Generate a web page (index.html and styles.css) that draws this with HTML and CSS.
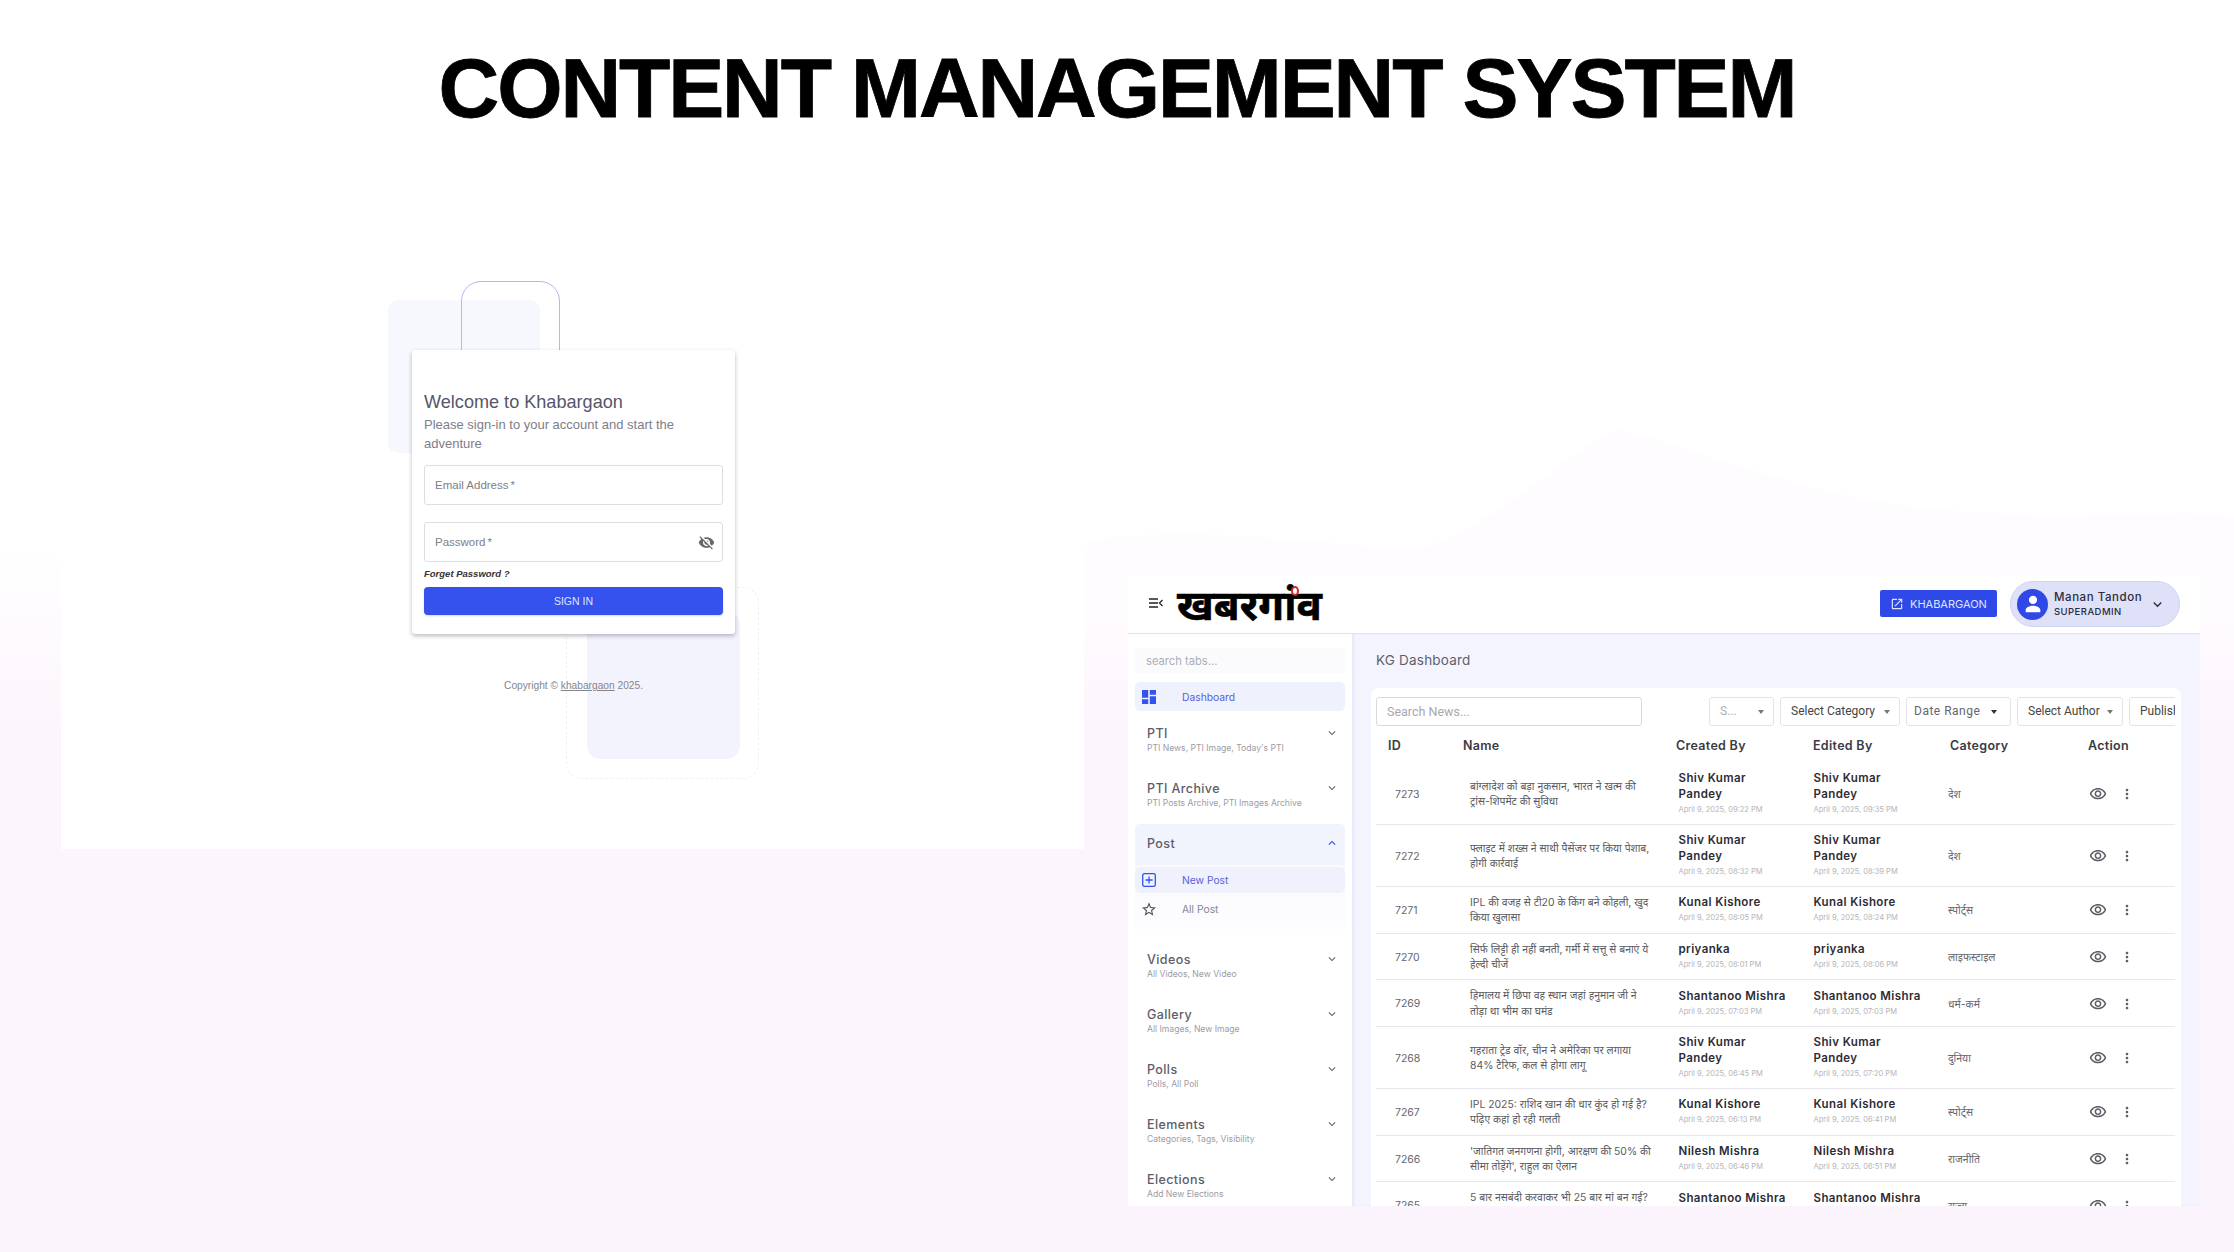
FILE: index.html
```html
<!DOCTYPE html>
<html>
<head>
	<title>Content Management System</title>
	<link rel="stylesheet" href="styles.css">
</head>
<body>
<svg class="defs" width="0" height="0">
	<symbol id="i-eye" viewBox="0 0 24 24"><path d="M12 6c3.79 0 7.17 2.13 8.82 5.5C19.17 14.87 15.79 17 12 17s-7.17-2.13-8.82-5.5C4.83 8.13 8.21 6 12 6m0-2C7 4 2.73 7.11 1 11.5 2.73 15.89 7 19 12 19s9.27-3.11 11-7.5C21.27 7.11 17 4 12 4zm0 5c1.38 0 2.5 1.12 2.5 2.5S13.38 14 12 14s-2.5-1.12-2.5-2.5S10.62 9 12 9m0-2c-2.48 0-4.5 2.02-4.5 4.5S9.52 16 12 16s4.5-2.02 4.5-4.5S14.48 7 12 7z"/></symbol>
	<symbol id="i-dots" viewBox="0 0 24 24"><path d="M12 8c1.1 0 2-.9 2-2s-.9-2-2-2-2 .9-2 2 .9 2 2 2zm0 2c-1.1 0-2 .9-2 2s.9 2 2 2 2-.9 2-2-.9-2-2-2zm0 6c-1.1 0-2 .9-2 2s.9 2 2 2 2-.9 2-2-.9-2-2-2z"/></symbol>
	<symbol id="i-down" viewBox="0 0 24 24"><path d="M16.59 8.59 12 13.17 7.41 8.59 6 10l6 6 6-6z"/></symbol>
	<symbol id="i-up" viewBox="0 0 24 24"><path d="M12 8l-6 6 1.41 1.41L12 10.83l4.59 4.58L18 14z"/></symbol>
</svg>

<div class="slide">
	<h1 class="slide-title">CONTENT MANAGEMENT SYSTEM</h1>

	<svg class="hill" viewBox="0 0 1147 190" preserveAspectRatio="none"><path d="M0 110C120 95 240 115 330 120 420 90 480 20 530 0 640 25 720 70 860 80 960 90 1060 80 1147 85V190H0z"/></svg>

	<!-- login shot -->
	<div class="login-shot">
		<span class="deco deco-fill-a"></span>
		<span class="deco deco-line"></span>
		<span class="deco deco-fill-b"></span>
		<span class="deco deco-dash"></span>
		<div class="login-card">
			<h2>Welcome to Khabargaon</h2>
			<p class="login-sub">Please sign-in to your account and start the adventure</p>
			<div class="login-input">Email Address<i>*</i></div>
			<div class="login-input login-pass">Password<i>*</i>
				<svg viewBox="0 0 24 24"><path d="M12 7c2.76 0 5 2.24 5 5 0 .65-.13 1.26-.36 1.83l2.92 2.92c1.51-1.26 2.7-2.89 3.43-4.75-1.73-4.39-6-7.5-11-7.5-1.4 0-2.74.25-3.98.7l2.16 2.16C10.74 7.13 11.35 7 12 7zM2 4.27l2.28 2.28.46.46C3.08 8.3 1.78 10.02 1 12c1.73 4.39 6 7.5 11 7.5 1.55 0 3.03-.3 4.38-.84l.42.42L19.73 22 21 20.73 3.27 3 2 4.27zM7.53 9.8l1.55 1.55c-.05.21-.08.43-.08.65 0 1.66 1.34 3 3 3 .22 0 .44-.03.65-.08l1.55 1.55c-.67.33-1.41.53-2.2.53-2.76 0-5-2.24-5-5 0-.79.2-1.53.53-2.2zm4.31-.78l3.15 3.15.02-.16c0-1.66-1.34-3-3-3l-.17.01z"/></svg>
			</div>
			<div class="login-forget">Forget Password ?</div>
			<div class="login-btn">SIGN IN</div>
		</div>
		<p class="login-copy">Copyright © <u>khabargaon</u> 2025.</p>
	</div>

	<!-- dashboard shot -->
	<div class="dash-shot">
		<header class="dash-head">
			<svg class="menu-icon" viewBox="0 0 14 10"><path d="M0 1h9M0 5h9M0 9h9M13.5 2 10.5 5l3 3" fill="none" stroke="#222" stroke-width="1.3"/></svg>
			<div class="logo">खबरगांव<span class="logo-ring"></span></div>
			<div class="site-btn">
				<svg viewBox="0 0 24 24"><path d="M19 19H5V5h7V3H5a2 2 0 0 0-2 2v14a2 2 0 0 0 2 2h14a2 2 0 0 0 2-2v-7h-2v7zM14 3v2h3.59l-9.83 9.83 1.41 1.41L19 6.41V10h2V3h-7z"/></svg>
				KHABARGAON
			</div>
			<div class="user-pill">
				<span class="avatar"><svg viewBox="0 0 24 24"><path d="M12 12a4.5 4.5 0 1 0 0-9 4.5 4.5 0 0 0 0 9zm0 2c-3.3 0-8 1.7-8 4.6V21h16v-2.4c0-2.9-4.7-4.6-8-4.6z"/></svg></span>
				<span class="user-text"><b>Manan Tandon</b><small>SUPERADMIN</small></span>
				<svg class="user-caret" viewBox="0 0 24 24"><use href="#i-down"/></svg>
			</div>
		</header>

		<aside class="side">
			<div class="side-search">search tabs...</div>
			<div class="side-item active">
				<svg class="blue" viewBox="3 3 18 18"><path d="M3 13h8V3H3v10zm0 8h8v-6H3v6zm10 0h8V11h-8v10zm0-18v6h8V3h-8z"/></svg>
				Dashboard
			</div>
			<div class="side-group"><div class="group-title">PTI<svg viewBox="0 0 24 24"><use href="#i-down"/></svg></div><small>PTI News, PTI Image, Today's PTI</small></div>
			<div class="side-group"><div class="group-title">PTI Archive<svg viewBox="0 0 24 24"><use href="#i-down"/></svg></div><small>PTI Posts Archive, PTI Images Archive</small></div>
			<div class="side-open">
				<div class="group-title open">Post<svg viewBox="0 0 24 24"><use href="#i-up"/></svg></div>
				<div class="side-item active">
					<svg class="blue" viewBox="0 0 14 14"><rect x=".7" y=".7" width="12.6" height="12.6" rx="1.6" fill="none" stroke="#3552ee" stroke-width="1.3"/><path d="M7 3.4v7.2M3.4 7h7.2" stroke="#3552ee" stroke-width="1.3"/></svg>
					New Post
				</div>
				<div class="side-item">
					<svg viewBox="2 2 20 19"><path d="M22 9.24l-7.19-.62L12 2 9.19 8.63 2 9.24l5.46 4.73L5.82 21 12 17.27 18.18 21l-1.63-7.03L22 9.24zM12 15.4l-3.76 2.27 1-4.28-3.32-2.88 4.38-.38L12 6.1l1.71 4.04 4.38.38-3.32 2.88 1 4.28L12 15.4z"/></svg>
					All Post
				</div>
			</div>
			<div class="side-group"><div class="group-title">Videos<svg viewBox="0 0 24 24"><use href="#i-down"/></svg></div><small>All Videos, New Video</small></div>
			<div class="side-group"><div class="group-title">Gallery<svg viewBox="0 0 24 24"><use href="#i-down"/></svg></div><small>All Images, New Image</small></div>
			<div class="side-group"><div class="group-title">Polls<svg viewBox="0 0 24 24"><use href="#i-down"/></svg></div><small>Polls, All Poll</small></div>
			<div class="side-group"><div class="group-title">Elements<svg viewBox="0 0 24 24"><use href="#i-down"/></svg></div><small>Categories, Tags, Visibility</small></div>
			<div class="side-group"><div class="group-title">Elections<svg viewBox="0 0 24 24"><use href="#i-down"/></svg></div><small>Add New Elections</small></div>
		</aside>

		<main class="main">
			<div class="crumb">KG Dashboard</div>
			<div class="panel">
				<div class="filters">
					<div class="news-search">Search News...</div>
					<div class="select sel-s">S...</div>
					<div class="select sel-cat">Select Category</div>
					<div class="select sel-date">Date Range</div>
					<div class="select sel-author">Select Author</div>
					<div class="select sel-pub">Publish Status</div>
				</div>
				<div class="thead"><span>ID</span><span>Name</span><span>Created By</span><span>Edited By</span><span>Category</span><span>Action</span></div>

				<div class="row tall">
					<span class="id">7273</span>
					<span class="name">बांग्लादेश को बड़ा नुकसान, भारत ने खत्म की<br>ट्रांस-शिपमेंट की सुविधा</span>
					<span class="who"><b>Shiv Kumar Pandey</b><small>April 9, 2025, 09:22 PM</small></span>
					<span class="who"><b>Shiv Kumar Pandey</b><small>April 9, 2025, 09:35 PM</small></span>
					<span class="cat">देश</span>
					<span class="acts"><svg class="eye"><use href="#i-eye"/></svg><svg class="dots"><use href="#i-dots"/></svg></span>
				</div>
				<div class="row tall">
					<span class="id">7272</span>
					<span class="name">फ्लाइट में शख्स ने साथी पैसेंजर पर किया पेशाब,<br>होगी कार्रवाई</span>
					<span class="who"><b>Shiv Kumar Pandey</b><small>April 9, 2025, 08:32 PM</small></span>
					<span class="who"><b>Shiv Kumar Pandey</b><small>April 9, 2025, 08:39 PM</small></span>
					<span class="cat">देश</span>
					<span class="acts"><svg class="eye"><use href="#i-eye"/></svg><svg class="dots"><use href="#i-dots"/></svg></span>
				</div>
				<div class="row">
					<span class="id">7271</span>
					<span class="name">IPL की वजह से टी20 के किंग बने कोहली, खुद<br>किया खुलासा</span>
					<span class="who"><b>Kunal Kishore</b><small>April 9, 2025, 08:05 PM</small></span>
					<span class="who"><b>Kunal Kishore</b><small>April 9, 2025, 08:24 PM</small></span>
					<span class="cat">स्पोर्ट्स</span>
					<span class="acts"><svg class="eye"><use href="#i-eye"/></svg><svg class="dots"><use href="#i-dots"/></svg></span>
				</div>
				<div class="row">
					<span class="id">7270</span>
					<span class="name">सिर्फ लिट्टी ही नहीं बनती, गर्मी में सत्तू से बनाएं ये<br>हेल्दी चीजें</span>
					<span class="who"><b>priyanka</b><small>April 9, 2025, 08:01 PM</small></span>
					<span class="who"><b>priyanka</b><small>April 9, 2025, 08:06 PM</small></span>
					<span class="cat">लाइफस्टाइल</span>
					<span class="acts"><svg class="eye"><use href="#i-eye"/></svg><svg class="dots"><use href="#i-dots"/></svg></span>
				</div>
				<div class="row">
					<span class="id">7269</span>
					<span class="name">हिमालय में छिपा वह स्थान जहां हनुमान जी ने<br>तोड़ा था भीम का घमंड</span>
					<span class="who"><b>Shantanoo Mishra</b><small>April 9, 2025, 07:03 PM</small></span>
					<span class="who"><b>Shantanoo Mishra</b><small>April 9, 2025, 07:03 PM</small></span>
					<span class="cat">धर्म-कर्म</span>
					<span class="acts"><svg class="eye"><use href="#i-eye"/></svg><svg class="dots"><use href="#i-dots"/></svg></span>
				</div>
				<div class="row tall">
					<span class="id">7268</span>
					<span class="name">गहराता ट्रेड वॉर, चीन ने अमेरिका पर लगाया<br>84% टैरिफ, कल से होगा लागू</span>
					<span class="who"><b>Shiv Kumar Pandey</b><small>April 9, 2025, 06:45 PM</small></span>
					<span class="who"><b>Shiv Kumar Pandey</b><small>April 9, 2025, 07:20 PM</small></span>
					<span class="cat">दुनिया</span>
					<span class="acts"><svg class="eye"><use href="#i-eye"/></svg><svg class="dots"><use href="#i-dots"/></svg></span>
				</div>
				<div class="row">
					<span class="id">7267</span>
					<span class="name">IPL 2025: राशिद खान की धार कुंद हो गई है?<br>पढ़िए कहां हो रही गलती</span>
					<span class="who"><b>Kunal Kishore</b><small>April 9, 2025, 06:13 PM</small></span>
					<span class="who"><b>Kunal Kishore</b><small>April 9, 2025, 06:41 PM</small></span>
					<span class="cat">स्पोर्ट्स</span>
					<span class="acts"><svg class="eye"><use href="#i-eye"/></svg><svg class="dots"><use href="#i-dots"/></svg></span>
				</div>
				<div class="row">
					<span class="id">7266</span>
					<span class="name">'जातिगत जनगणना होगी, आरक्षण की 50% की<br>सीमा तोड़ेंगे', राहुल का ऐलान</span>
					<span class="who"><b>Nilesh Mishra</b><small>April 9, 2025, 06:46 PM</small></span>
					<span class="who"><b>Nilesh Mishra</b><small>April 9, 2025, 06:51 PM</small></span>
					<span class="cat">राजनीति</span>
					<span class="acts"><svg class="eye"><use href="#i-eye"/></svg><svg class="dots"><use href="#i-dots"/></svg></span>
				</div>
				<div class="row">
					<span class="id">7265</span>
					<span class="name">5 बार नसबंदी करवाकर भी 25 बार मां बन गई?<br>जानिए पूरा मामला</span>
					<span class="who"><b>Shantanoo Mishra</b><small>April 9, 2025, 06:20 PM</small></span>
					<span class="who"><b>Shantanoo Mishra</b><small>April 9, 2025, 06:20 PM</small></span>
					<span class="cat">राज्य</span>
					<span class="acts"><svg class="eye"><use href="#i-eye"/></svg><svg class="dots"><use href="#i-dots"/></svg></span>
				</div>
			</div>
		</main>
	</div>
</div>
</body>
</html>
```
FILE: styles.css
```css
*{
	padding: 0;
	margin: 0;
	box-sizing: border-box;
}
body{
	width: 2234px;
	height: 1252px;
	overflow: hidden;
	background: #fff;
	font-family: "Inter", "Noto Sans", sans-serif;
}
.defs{
	position: absolute;
}
.slide{
	position: relative;
	width: 2234px;
	height: 1252px;
	background: linear-gradient(180deg, #fff 0, #fff 44%, #fdf5fd 58%, #fcf4fd 100%);
}
.slide-title{
	padding-top: 39px;
	text-align: center;
	font: 700 84px/98px "Liberation Sans", Arial, sans-serif;
	letter-spacing: -2.1px;
	-webkit-text-stroke: .8px #000;
	color: #000;
}
.hill{
	position: absolute;
	left: 1087px;
	top: 430px;
	width: 1147px;
	height: 190px;
	fill: #fefcfe;
}

/* login */
.login-shot{
	position: absolute;
	left: 61px;
	top: 255px;
	width: 1023px;
	height: 594px;
	padding: 95px 0 0 2px;
	background: #fff;
	display: flex;
	flex-direction: column;
	align-items: center;
	font-family: "Liberation Sans", Arial, sans-serif;
}
.deco{
	position: absolute;
	display: block;
}
.deco-fill-a{
	left: 327px;
	top: 45px;
	width: 152px;
	height: 153px;
	background: #f7f7fe;
	border-radius: 10px;
}
.deco-line{
	left: 400px;
	top: 26px;
	width: 99px;
	height: 100px;
	border: 1.5px solid #b9b5ee;
	border-radius: 20px;
}
.deco-fill-b{
	left: 526px;
	top: 356px;
	width: 153px;
	height: 148px;
	background: #f3f3fd;
	border-radius: 14px;
}
.deco-dash{
	left: 505px;
	top: 332px;
	width: 193px;
	height: 192px;
	border: 1.5px dashed #f0f0f5;
	border-radius: 16px;
}
.login-card{
	position: relative;
	width: 323px;
	height: 284px;
	padding: 40px 12px 0;
	background: #fff;
	border-radius: 3px;
	box-shadow: 0 2px 4px rgba(60,60,80,.35);
}
.login-card h2{
	font-size: 18.1px;
	line-height: 24px;
	font-weight: 400;
	color: #56566a;
}
.login-sub{
	margin-top: 1px;
	font-size: 13px;
	line-height: 19px;
	color: #7d7d88;
}
.login-input{
	display: flex;
	align-items: center;
	height: 40px;
	margin-top: 12px;
	padding-left: 10px;
	border: 1px solid #dedee2;
	border-radius: 3px;
	font-size: 11.5px;
	color: #808088;
}
.login-input i{
	font-style: normal;
	margin-left: 2px;
}
.login-pass{
	margin-top: 17px;
}
.login-pass svg{
	width: 17px;
	height: 17px;
	margin-left: auto;
	margin-right: 7px;
	fill: #66666e;
}
.login-forget{
	margin-top: 6px;
	font-size: 9.5px;
	line-height: 12px;
	font-weight: 700;
	font-style: italic;
	color: #333;
}
.login-btn{
	margin-top: 7px;
	height: 28px;
	line-height: 28px;
	text-align: center;
	background: #3552ee;
	border-radius: 4px;
	font-size: 10.5px;
	color: #dfe4ff;
	box-shadow: 0 1px 2px rgba(60,60,80,.2);
}
.login-copy{
	position: relative;
	margin-top: 45px;
	font-size: 10.2px;
	line-height: 14px;
	color: #85858c;
}

/* dashboard */
.dash-shot{
	position: absolute;
	left: 1128px;
	top: 575px;
	width: 1072px;
	height: 631px;
	overflow: hidden;
	display: grid;
	grid-template-columns: 224px 1fr;
	grid-template-rows: 59px 1fr;
	background: #fff;
}
.dash-head{
	grid-column: 1 / 3;
	display: flex;
	align-items: center;
	padding: 0 20px 0 21px;
	background: #fff;
	border-bottom: 1px solid #e4e4e8;
}
.menu-icon{
	width: 14px;
	height: 10px;
	margin-top: -3px;
}
.logo{
	position: relative;
	margin-left: 14px;
	font: 700 42px/50px "Noto Sans", "Liberation Serif", serif;
	color: #000;
	-webkit-text-stroke: .6px #000;
}
.logo-ring{
	position: absolute;
	left: 114px;
	top: 7px;
	width: 8px;
	height: 10px;
	background: #fff;
	border: 2px solid #d8262c;
	border-radius: 50%;
}
.site-btn{
	display: flex;
	align-items: center;
	gap: 6px;
	margin-left: auto;
	width: 117px;
	height: 27px;
	padding-left: 10px;
	background: #2f48e8;
	border-radius: 2px;
	color: #dfe4ff;
	font-size: 11px;
	margin-top: -1px;
}
.site-btn svg{
	width: 14px;
	height: 14px;
	fill: #dfe4ff;
}
.user-pill{
	display: flex;
	align-items: center;
	width: 170px;
	height: 46px;
	margin-left: 13px;
	padding-left: 6px;
	background: #dfe1f8;
	border: 1px solid #d0d3f3;
	border-radius: 23px;
}
.avatar{
	display: flex;
	align-items: center;
	justify-content: center;
	width: 31px;
	height: 31px;
	background: #2f48e8;
	border-radius: 50%;
}
.avatar svg{
	width: 22px;
	height: 22px;
	fill: #fff;
}
.user-text{
	display: flex;
	flex-direction: column;
	margin-left: 6px;
	color: #2c2c3a;
}
.user-text b{
	font-size: 11.5px;
	line-height: 15px;
	font-weight: 500;
	letter-spacing: .55px;
}
.user-text small{
	font-size: 9.5px;
	line-height: 14px;
	font-weight: 500;
	letter-spacing: .45px;
}
.user-caret{
	width: 17px;
	height: 17px;
	margin-left: 7px;
	fill: #2c2c3a;
}

/* sidebar */
.side{
	overflow: hidden;
	padding: 14px 7px 0;
	background: #fff;
}
.side-search{
	height: 25px;
	padding-left: 11px;
	line-height: 27px;
	background: #fbfbfe;
	font-size: 11.2px;
	color: #aeaeb6;
}
.side-item{
	display: flex;
	align-items: center;
	height: 26px;
	padding-left: 7px;
	border-radius: 5px;
	font-size: 10.3px;
	color: #85858e;
}
.side-item svg{
	width: 14px;
	height: 14px;
	margin-right: 26px;
	fill: #555;
}
.side-item.active{
	background: #eff1fc;
	color: #5a5fe0;
}
.side-item.active svg{
	fill: #3552ee;
}
.side-search + .side-item{
	height: 29px;
	margin-top: 9px;
	margin-bottom: 3px;
}
.side-group{
	height: 55px;
	padding: 10px 6px 0 12px;
}
.group-title{
	display: flex;
	align-items: center;
	justify-content: space-between;
	height: 18px;
	font-size: 12.5px;
	font-weight: 500;
	letter-spacing: .4px;
	color: #5d5d69;
}
.group-title svg{
	width: 14px;
	height: 14px;
	fill: #66666e;
}
.side-group small{
	display: block;
	margin-top: 1px;
	font-size: 8.6px;
	line-height: 11px;
	color: #9c9ca6;
}
.side-open{
	height: 116px;
	background: linear-gradient(180deg, #f9f9fe 0, #fcfcff 85%, #fff 100%);
	border-radius: 5px;
}
.group-title.open{
	height: 41px;
	padding: 0 6px 3px 12px;
	margin-bottom: 2px;
	background: #f1f3fd;
	border-radius: 5px 5px 0 0;
}
.group-title.open svg{
	fill: #3552ee;
}
.side-open .side-item + .side-item{
	margin-top: 3px;
}

/* content */
.main{
	overflow: hidden;
	padding: 0 19px;
	background: #f3f4fe;
	box-shadow: inset 2px 0 2px rgba(120,120,180,.08);
}
.crumb{
	padding: 18px 0 0 5px;
	height: 54px;
	font-size: 13.5px;
	line-height: 16px;
	letter-spacing: .2px;
	color: #5f5f68;
}
.panel{
	padding: 9px 6px 0 5px;
	background: #fff;
	border-radius: 8px 8px 0 0;
}
.filters{
	display: flex;
	height: 29px;
	overflow: hidden;
	font-family: "Roboto", sans-serif;
	font-size: 12px;
	color: #444;
}
.news-search{
	flex: none;
	width: 266px;
	margin-right: 67px;
	padding-left: 10px;
	line-height: 27px;
	border: 1px solid #d9d9dd;
	border-radius: 3px;
	color: #a8a8ae;
	font-size: 12.5px;
}
.select{
	position: relative;
	flex: none;
	margin-right: 6px;
	padding-left: 10px;
	line-height: 27px;
	border: 1px solid #e4e4e8;
	border-radius: 3px;
}
.select::after{
	content: "";
	position: absolute;
	top: 12px;
	right: 9px;
	border: 3.5px solid transparent;
	border-top: 4px solid #777;
	border-bottom: 0;
}
.sel-s{
	width: 65px;
	color: #b0b0b6;
}
.sel-cat{
	width: 120px;
}
.sel-date{
	width: 105px;
	padding-left: 7px;
	letter-spacing: .5px;
	color: #66666e;
}
.sel-date::after{
	right: 13px;
	border-top-color: #333;
}
.sel-author{
	width: 106px;
}
.sel-pub{
	width: 100px;
}
.thead{
	display: grid;
	grid-template-columns: 75px 213px 137px 137px 138px 1fr;
	height: 37px;
	padding: 2px 0 0 12px;
	align-items: center;
	font-size: 12.5px;
	font-weight: 600;
	letter-spacing: .3px;
	color: #3a3a44;
}
.row{
	display: grid;
	grid-template-columns: 75px 208.5px 135px 134.5px 142px 85px;
	align-items: center;
	height: 46.7px;
	padding: 1px 0 0 19px;
	border-bottom: 1px solid #e8e8ec;
}
.row.tall{
	height: 62px;
}
.id{
	font-size: 10.5px;
	color: #66666e;
}
.name{
	font-size: 10.4px;
	line-height: 15.5px;
	color: #5a5a60;
}
.who b{
	display: block;
	max-width: 112px;
	font-size: 11.5px;
	line-height: 16px;
	font-weight: 600;
	letter-spacing: .4px;
	color: #2c2c34;
}
.who small{
	display: block;
	font-size: 7.5px;
	line-height: 16px;
	color: #b4b4ba;
}
.cat{
	font-size: 10.5px;
	color: #66666e;
}
.acts{
	display: flex;
	align-items: center;
}
.eye{
	width: 18px;
	height: 18px;
	margin-left: -1px;
	fill: #5c5c64;
}
.dots{
	width: 16px;
	height: 16px;
	margin-left: 12px;
	fill: #5c5c64;
}
```
